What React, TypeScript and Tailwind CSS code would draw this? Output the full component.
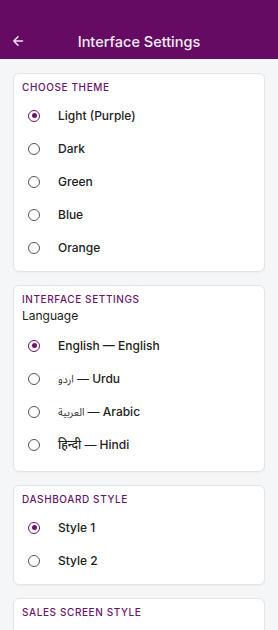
import React from "react";

const P = "#650b63";

function Radio({ checked }: { checked: boolean }) {
  return checked ? (
    <span className="flex h-[12px] w-[12px] items-center justify-center rounded-full border-[1.5px] border-[#6a1469]">
      <span className="h-[5px] w-[5px] rounded-full bg-[#6a1469]" />
    </span>
  ) : (
    <span className="h-[12px] w-[12px] rounded-full border border-[#555]" />
  );
}

function Item({ label, checked }: { label: React.ReactNode; checked?: boolean }) {
  return (
    <div className="flex h-[33px] items-center pl-[6px]">
      <Radio checked={!!checked} />
      <span className="ml-[18px] text-[12px] font-medium text-[#222]">{label}</span>
    </div>
  );
}

function Card({ title, children, extra }: { title: string; children: React.ReactNode; extra?: string }) {
  return (
    <div className={"shrink-0 rounded-[6px] border border-[#e3e4e8] bg-white px-[8px] shadow-[0_1px_2px_rgba(0,0,0,0.04)] " + (extra ?? "pb-[7px] pt-[6px]")}>
      <div className="mb-[5px] text-[10px] font-medium leading-[14px] tracking-[0.06em] text-[#6a1469]">{title}</div>
      {children}
    </div>
  );
}

export default function App() {
  return (
    <div
      className="min-h-[630px] w-[278px] bg-[#f5f6f8]"
      style={{ fontFamily: "Inter, 'Noto Sans', 'Noto Sans Arabic', 'Noto Sans Devanagari', sans-serif" }}
    >
      <div className="relative flex h-[59px] items-center justify-center pt-[24px]" style={{ backgroundColor: P }}>
        <svg className="absolute left-[12px] top-[35px]" width="12" height="12" viewBox="0 0 12 12" fill="none" stroke="#f3e6f2" strokeWidth="1.5" strokeLinecap="round" strokeLinejoin="round">
          <path d="M10.5 6H1.8M6 1.8 1.8 6 6 10.2" />
        </svg>
        <span className="text-[14.5px] font-medium text-[#f6ecf5]">Interface Settings</span>
      </div>
      <div className="flex h-[571px] flex-col gap-[13px] overflow-hidden px-[13px] pt-[14px]">
        <Card title="CHOOSE THEME">
          <Item label="Light (Purple)" checked />
          <Item label="Dark" />
          <Item label="Green" />
          <Item label="Blue" />
          <Item label="Orange" />
        </Card>
        <Card title="INTERFACE SETTINGS" extra="pb-[10px] pt-[6px]">
          <div className="-mt-[3px] mb-[5px] text-[12px] leading-[16px] text-[#222]">Language</div>
          <Item label="English — English" checked />
          <Item label={<><span className="text-[10.5px] font-normal text-[#333]">اردو</span> — Urdu</>} />
          <Item label={<><span className="text-[10.5px] font-normal text-[#333]">العربية</span> — Arabic</>} />
          <Item label="हिन्दी — Hindi" />
        </Card>
        <Card title="DASHBOARD STYLE" extra="pb-[7px] pt-[6px]">
          <Item label="Style 1" checked />
          <Item label="Style 2" />
        </Card>
        <Card title="SALES SCREEN STYLE" extra="pb-[7px] pt-[6px]">
          <div className="h-[66px]" />
        </Card>
      </div>
    </div>
  );
}
